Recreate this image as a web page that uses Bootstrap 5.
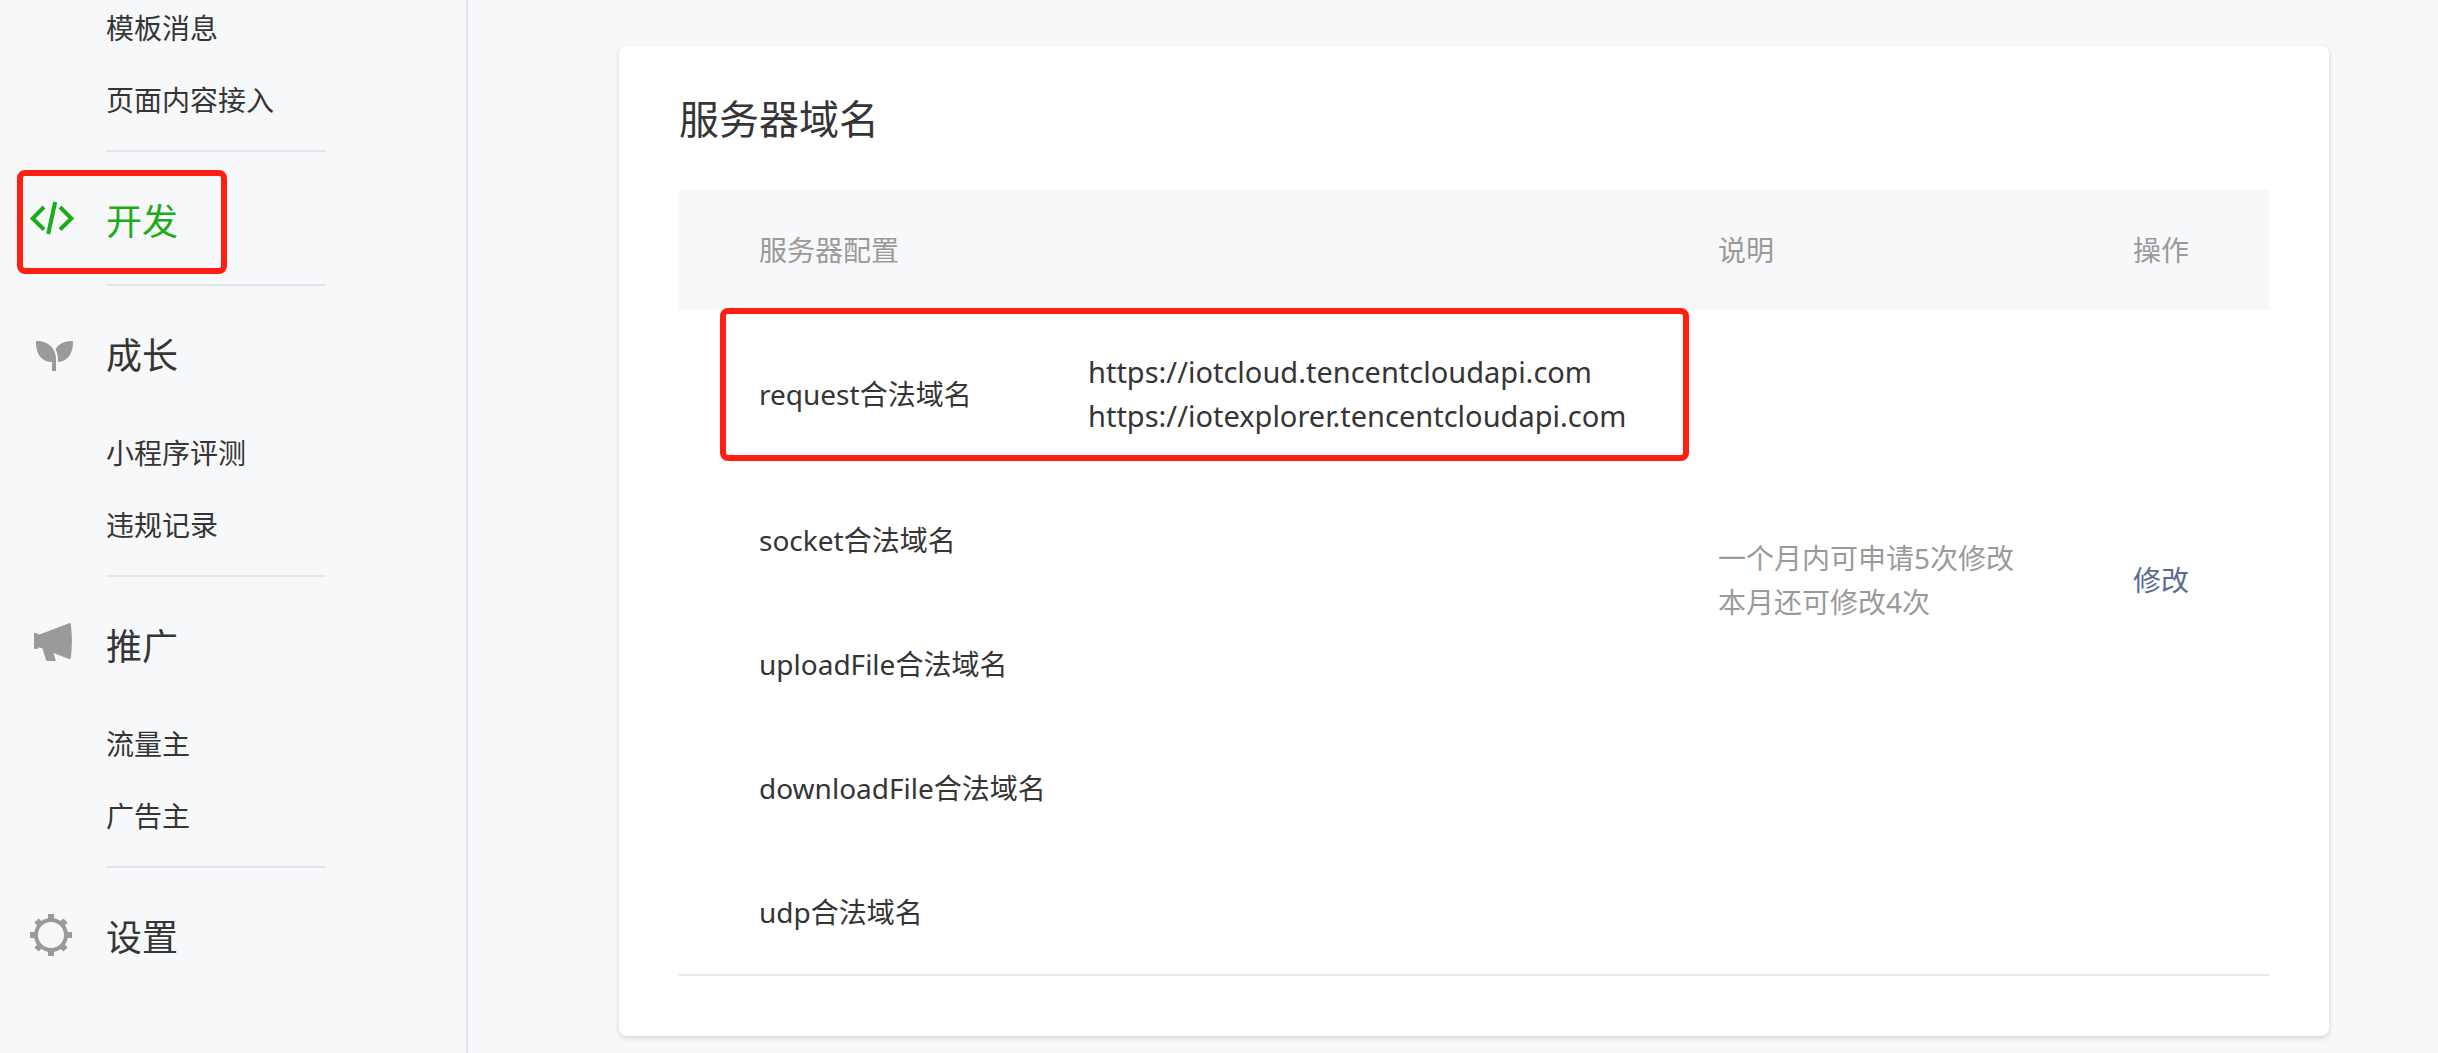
<!DOCTYPE html>
<html lang="zh-CN">
<head>
<meta charset="utf-8">
<meta name="viewport" content="width=device-width, initial-scale=1">
<title>服务器域名</title>
<link href="https://cdn.jsdelivr.net/npm/bootstrap@5.3.0/dist/css/bootstrap.min.css" rel="stylesheet">
<style>
  body {
    background: #f7f8fa;
    color: #353535;
    font-family: "Noto Sans", "Noto Sans CJK SC", sans-serif;
    font-size: 28px;
    line-height: 44px;
  }
  .side-nav { width: 468px; border-right: 2px solid #e4e5e8; }
  .side-nav a { color: inherit; text-decoration: none; }
  .nav-group + .nav-group::before {
    content: ""; display: block; height: 2px; width: 220px;
    margin-left: 106px; background: #e4e5e8;
  }
  .group-title { height: 132px; padding-left: 28px; gap: 30px; font-size: 36px; color: #353535; }
  .group-title a { padding-top: 8px; }
  .group-title svg { width: 48px; height: 48px; color: #9a9a9a; }
  .group-title.current a, .group-title.current svg { color: #1aad19; }
  .group-links { padding: 13px 0 28px 106px; gap: 28px; margin: 0; }
  .nav-group:first-child .group-links { padding-top: 6px; }
  .callout-frame {
    position: absolute; border: 6px solid #ff1f12; border-radius: 8px; pointer-events: none;
  }
  .current .callout-frame { left: 17px; top: 18px; width: 210px; height: 104px; }
  .content-area { padding: 46px 109px 17px 151px; }
  .panel-box {
    border: 0; border-radius: 8px; padding: 45px 60px 60px;
    box-shadow: 0 2px 5px rgba(0, 0, 0, .15);
  }
  .panel-title { font-size: 40px; line-height: 56px; font-weight: 400; margin: 0 0 43px; }
  .domain-table { table-layout: fixed; color: inherit; border-bottom: 2px solid #e7e7eb; margin: 0; }
  .domain-table > :not(caption) > * > * { border: 0; padding: 40px 0; background: none; vertical-align: middle; color: inherit; box-shadow: none; }
  .domain-table > thead > tr > th { background: #f7f8fa; color: #9a9a9a; font-weight: 400; padding: 38px 0; }
  .domain-table > :not(caption) > tr > .name-cell { padding-left: 80px; font-weight: 400; }
  .domain-table > tbody > tr > .note-cell { color: #9a9a9a; }
  .url-cell { font-size: 29px; }
  .col-name { width: 409px; }
  .col-note { width: 415px; }
  .col-act { width: 136px; }
  .edit-link { color: #576b95; text-decoration: none; }
  .marked-row .callout-frame { left: 41px; right: 580px; top: -2px; bottom: 17px; }
</style>
</head>
<body>
<div class="d-flex min-vh-100">
  <nav class="side-nav flex-shrink-0">
    <section class="nav-group">
      <ul class="group-links list-unstyled d-flex flex-column">
        <li><a href="#">模板消息</a></li>
        <li><a href="#">页面内容接入</a></li>
      </ul>
    </section>
    <section class="nav-group">
      <div class="group-title current position-relative d-flex align-items-center">
        <svg viewBox="0 0 48 48" fill="none" stroke="currentColor" stroke-width="4" aria-hidden="true"><path d="M16 13 4.600 24.500 16 35.500M32 13 43.400 24.500 32 35.500M27.200 8 20.200 40"/></svg>
        <a href="#">开发</a>
        <span class="callout-frame"></span>
      </div>
    </section>
    <section class="nav-group">
      <div class="group-title d-flex align-items-center">
        <svg viewBox="0 0 48 48" fill="currentColor" aria-hidden="true"><path d="M8 13C19 12.500 28 19.500 28 31V43H24V34C13.500 34 7.500 26 8 13ZM45 13C45.500 24 40.500 33.500 30 34C30.200 29.500 29.500 25 27.500 21C31 15.500 37 12.700 45 13Z"/></svg>
        <a href="#">成长</a>
      </div>
      <ul class="group-links list-unstyled d-flex flex-column">
        <li><a href="#">小程序评测</a></li>
        <li><a href="#">违规记录</a></li>
      </ul>
    </section>
    <section class="nav-group">
      <div class="group-title d-flex align-items-center">
        <svg viewBox="0 0 48 48" fill="currentColor" aria-hidden="true"><path d="M6 15Q6 14 7 14H9Q10 16 11.500 15.500L41 4.200Q42.500 3.500 42.800 5Q45 22 42.800 39Q42.500 40.500 41 40L25.500 34 27.500 40.500Q28 42 26.500 42H19.500Q18.500 42 18 41L14.500 29.500 11.500 28.500Q10 28 9 30H7Q6 30 6 29Z"/></svg>
        <a href="#">推广</a>
      </div>
      <ul class="group-links list-unstyled d-flex flex-column">
        <li><a href="#">流量主</a></li>
        <li><a href="#">广告主</a></li>
      </ul>
    </section>
    <section class="nav-group">
      <div class="group-title d-flex align-items-center">
        <svg viewBox="0 0 48 48" fill="none" stroke="currentColor" aria-hidden="true">
          <circle cx="23" cy="25" r="15" stroke-width="4"/>
          <path stroke-width="6" d="M23 4V9M23 41V46M2 25H7M39 25H44M8.500 10.500 12 14M34 36 37.500 39.500M8.500 39.500 12 36M34 14 37.500 10.500"/>
        </svg>
        <a href="#">设置</a>
      </div>
    </section>
  </nav>

  <main class="content-area flex-grow-1">
    <div class="card panel-box">
      <h1 class="panel-title">服务器域名</h1>
      <table class="table domain-table">
        <colgroup><col class="col-name"><col><col class="col-note"><col class="col-act"></colgroup>
        <thead>
          <tr><th class="name-cell" colspan="2" scope="col">服务器配置</th><th scope="col">说明</th><th scope="col">操作</th></tr>
        </thead>
        <tbody>
          <tr class="marked-row position-relative">
            <th class="name-cell" scope="row">request合法域名<span class="callout-frame"></span></th>
            <td class="url-cell">https://iotcloud.tencentcloudapi.com<br>https://iotexplorer.tencentcloudapi.com</td>
            <td class="note-cell" rowspan="4">一个月内可申请5次修改<br>本月还可修改4次</td>
            <td rowspan="4"><a class="edit-link" href="#">修改</a></td>
          </tr>
          <tr><th class="name-cell" scope="row">socket合法域名</th><td></td></tr>
          <tr><th class="name-cell" scope="row">uploadFile合法域名</th><td></td></tr>
          <tr><th class="name-cell" scope="row">downloadFile合法域名</th><td></td></tr>
          <tr><th class="name-cell" scope="row">udp合法域名</th><td></td><td></td><td></td></tr>
        </tbody>
      </table>
    </div>
  </main>
</div>
<script src="https://cdn.jsdelivr.net/npm/bootstrap@5.3.0/dist/js/bootstrap.bundle.min.js"></script>
</body>
</html>
